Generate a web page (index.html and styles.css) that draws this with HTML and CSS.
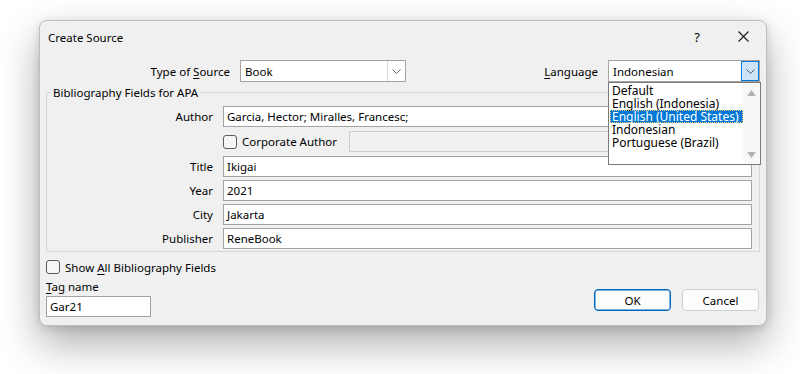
FILE: index.html
```html
<!DOCTYPE html>
<html lang="en">
<head>
  <meta charset="UTF-8">
  <title>Create Source</title>
  <link rel="stylesheet" href="styles.css">
</head>
<body>

<div class="dialog">
  <div class="titlebar">
    <span class="title">Create Source</span>
    <span class="caption-btn help">?</span>
    <span class="caption-btn close">
      <svg width="11" height="11" viewBox="0 0 11 11"><path d="M0.5 0.5 L10.5 10.5 M10.5 0.5 L0.5 10.5" stroke="#1a1a1a" stroke-width="1.1" fill="none"/></svg>
    </span>
  </div>

  <div class="content">
    <div class="top-row">
      <label class="top-label type-label">Type of <u>S</u>ource</label>
      <div class="select type-select">
        <span class="select-value">Book</span>
        <span class="select-btn">
          <svg width="9" height="5" viewBox="0 0 9 5"><path d="M0.5 0.5 L4.5 4.5 L8.5 0.5" stroke="#666" fill="none"/></svg>
        </span>
      </div>

      <div class="lang-group">
        <label class="top-label"><u>L</u>anguage</label>
        <div class="select lang-select">
          <span class="select-value">Indonesian</span>
          <span class="select-btn open">
            <svg width="9" height="5" viewBox="0 0 9 5"><path d="M0.5 0.5 L4.5 4.5 L8.5 0.5" stroke="#555" fill="none"/></svg>
          </span>
          <div class="droplist">
            <ul class="options">
              <li>Default</li>
              <li>English (Indonesia)</li>
              <li class="selected">English (United States)</li>
              <li>Indonesian</li>
              <li>Portuguese (Brazil)</li>
            </ul>
            <div class="scrollbar">
              <svg width="9" height="6" viewBox="0 0 9 6"><path d="M4.5 0 L9 6 L0 6 Z" fill="#b4b4b4"/></svg>
              <svg width="9" height="6" viewBox="0 0 9 6"><path d="M0 0 L9 0 L4.5 6 Z" fill="#b4b4b4"/></svg>
            </div>
          </div>
        </div>
      </div>
    </div>

    <fieldset class="group">
      <legend>Bibliography Fields for APA</legend>
      <div class="fields">
        <label class="field-label">Author</label>
        <div class="input">Garcia, Hector; Miralles, Francesc;</div>

        <span></span>
        <div class="corp-row">
          <span class="checkbox"></span>
          <span class="check-text">Corporate Author</span>
          <div class="input disabled"></div>
        </div>

        <label class="field-label">Title</label>
        <div class="input">Ikigai</div>

        <label class="field-label">Year</label>
        <div class="input">2021</div>

        <label class="field-label">City</label>
        <div class="input">Jakarta</div>

        <label class="field-label">Publisher</label>
        <div class="input">ReneBook</div>
      </div>
    </fieldset>

    <div class="bottom">
      <div class="bottom-left">
        <div class="show-all">
          <span class="checkbox"></span>
          <span class="check-text">Show <u>A</u>ll Bibliography Fields</span>
        </div>
        <label class="tag-label"><u>T</u>ag name</label>
        <div class="input tag-input">Gar21</div>
      </div>
      <div class="buttons">
        <button class="btn btn-default">OK</button>
        <button class="btn">Cancel</button>
      </div>
    </div>
  </div>
</div>

</body>
</html>
```

FILE: styles.css
```css
html {
  background: #ffffff;
}

body {
  margin: 0;
  padding: 20px 0 0 39px;
  height: 354px;
  font-family: 'Segoe UI', 'Noto Sans', sans-serif;
  font-size: 11.5px;
  color: #000;
}

u {
  text-decoration-thickness: 1px;
  text-underline-offset: 2px;
}

.dialog {
  width: 726px;
  height: 304px;
  background: #f0f0f0;
  border: 1px solid #bdbdbd;
  border-radius: 8px;
  box-shadow: 0 18px 40px rgba(0, 0, 0, 0.32), 0 2px 10px rgba(0, 0, 0, 0.14);
}

/* Title bar */
.titlebar {
  display: flex;
  align-items: center;
  height: 31px;
}

.title {
  flex: 1;
  padding-left: 8px;
  padding-top: 1px;
}

.caption-btn {
  width: 46px;
  height: 31px;
  display: flex;
  align-items: center;
  justify-content: center;
}

.help {
  font-size: 13px;
  padding-left: 6px;
}

.close svg {
  display: block;
}

.content {
  padding: 8px 5px 0 5px;
}

/* Top row with the two dropdowns */
.top-row {
  display: flex;
  align-items: center;
  height: 22px;
}

.top-label {
  text-align: right;
  margin-right: 10px;
}

.type-label {
  width: 185px;
}

.select {
  position: relative;
  height: 20px;
  background: #fff;
  border: 1px solid #a3a3a3;
  display: flex;
  align-items: center;
}

.type-select {
  width: 164px;
}

.lang-group {
  margin-left: auto;
  display: flex;
  align-items: center;
  margin-right: 1px;
}

.lang-select {
  width: 150px;
}

.select-value {
  flex: 1;
  padding-left: 4px;
}

.select-btn {
  width: 17px;
  height: 20px;
  border-left: 1px solid #d9d9d9;
  display: flex;
  align-items: center;
  justify-content: center;
}

.select-btn.open {
  width: 16px;
  height: 18px;
  border: 1px solid #0078d7;
  background: #cce4f7;
}

/* Opened language list */
.droplist {
  position: absolute;
  top: 21px;
  left: -1px;
  width: 151px;
  height: 81px;
  background: #fff;
  border: 1px solid #7a7a7a;
  display: flex;
  z-index: 2;
}

.options {
  list-style: none;
  margin: 0;
  padding: 1px 0 0 1px;
  flex: 1;
}

.options li {
  height: 13px;
  line-height: 13px;
  font-size: 12px;
  padding-left: 2px;
  white-space: nowrap;
}

.options li.selected {
  background: #0078d7;
  color: #fff;
  outline: 1px dotted #f5c66b;
  outline-offset: -1px;
}

.scrollbar {
  width: 17px;
  display: flex;
  flex-direction: column;
  justify-content: space-between;
  align-items: center;
  padding: 7px 0 6px;
  background: #f8f8f8;
}

.scrollbar svg {
  display: block;
}

/* Bibliography group */
.group {
  margin: 3px 0 0 1px;
  padding: 0 7px 2px 0;
  border: 1px solid #d5d5d5;
  box-sizing: border-box;
  width: 714px;
}

.group legend {
  padding: 0 2px;
  margin-left: 4px;
  line-height: 15px;
}

.fields {
  display: grid;
  grid-template-columns: 166px 1fr;
  column-gap: 10px;
  row-gap: 3px;
  align-items: center;
  padding-top: 6px;
}

.field-label {
  text-align: right;
}

.input {
  height: 19px;
  line-height: 19px;
  background: #fff;
  border: 1px solid #a3a3a3;
  padding-left: 3px;
  white-space: nowrap;
}

.input.disabled {
  flex: 1;
  background: #f0f0f0;
  border-color: #cccccc;
  margin-left: 12px;
}

.corp-row {
  display: flex;
  align-items: center;
  margin: 1px 0;
}

.checkbox {
  width: 12px;
  height: 12px;
  border: 1px solid #5c5c5c;
  border-radius: 3px;
  background: #f6f6f6;
  margin-right: 5px;
}

/* Bottom area */
.bottom {
  display: flex;
  align-items: flex-end;
  justify-content: space-between;
  margin-top: 8px;
  padding-left: 1px;
}

.show-all {
  display: flex;
  align-items: center;
  height: 14px;
}

.tag-label {
  display: block;
  margin-top: 5px;
  line-height: 16px;
}

.tag-input {
  width: 100px;
  margin-top: 1px;
}

.buttons {
  display: flex;
  gap: 11px;
  margin-bottom: 6px;
  margin-right: 2px;
}

.btn {
  width: 77px;
  height: 22px;
  font-family: inherit;
  font-size: 11.5px;
  background: #fdfdfd;
  border: 1px solid #d0d0d0;
  border-radius: 4px;
  color: #000;
  padding: 0;
}

.btn-default {
  border: 1px solid #0067c0;
  box-shadow: inset 0 0 0 0.5px #0067c0;
}
```
